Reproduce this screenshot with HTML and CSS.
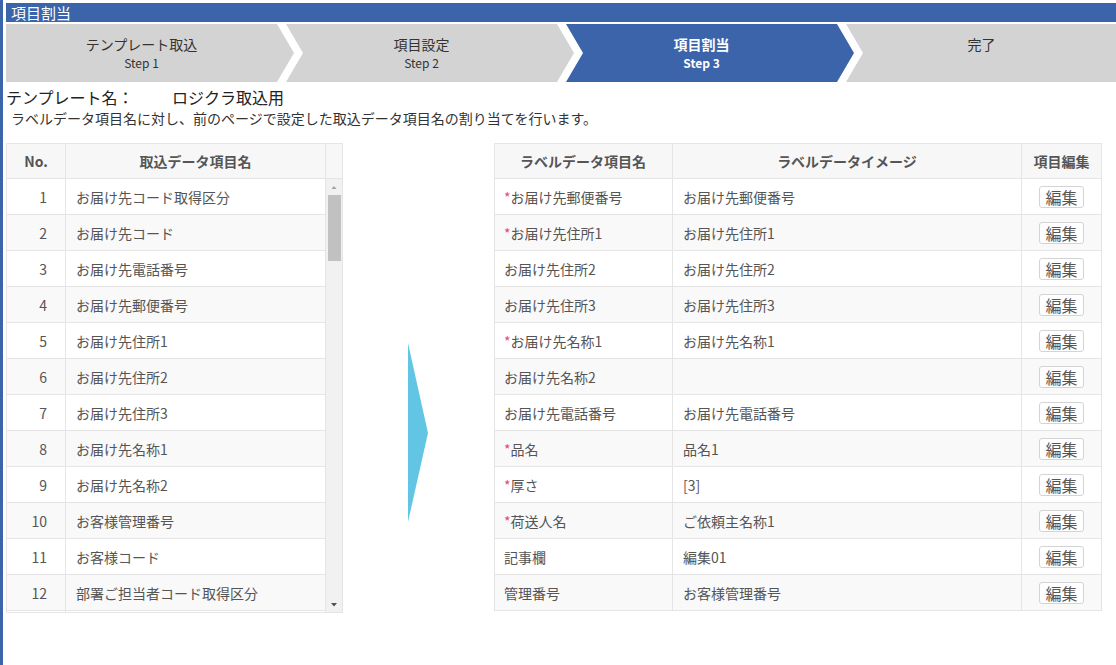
FILE: index.html
```html
<!DOCTYPE html>
<html lang="ja">
<head>
    <meta charset="UTF-8" />
    <title>項目割当</title>
    <link rel="stylesheet" href="styles.css">
</head>
<body>
<div class="page">
    <div class="page-title">項目割当</div>

    <ol class="steps">
        <li class="step"><span class="step-name">テンプレート取込</span><span class="step-no">Step 1</span></li>
        <li class="step"><span class="step-name">項目設定</span><span class="step-no">Step 2</span></li>
        <li class="step active"><span class="step-name">項目割当</span><span class="step-no">Step 3</span></li>
        <li class="step"><span class="step-name">完了</span><span class="step-no"></span></li>
    </ol>

    <div class="template-name"><span class="template-label">テンプレート名：</span>ロジクラ取込用</div>
    <p class="lead">ラベルデータ項目名に対し、前のページで設定した取込データ項目名の割り当てを行います。</p>

    <div class="mapping">
        <!-- 取込データ項目 -->
        <div class="source">
            <div class="source-head">
                <div class="cell">No.</div>
                <div class="cell">取込データ項目名</div>
                <div class="cell gutter"></div>
            </div>
            <div class="source-body">
                <div class="source-rows">
                    <div class="row"><div class="cell no">1</div><div class="cell">お届け先コード取得区分</div></div>
                    <div class="row"><div class="cell no">2</div><div class="cell">お届け先コード</div></div>
                    <div class="row"><div class="cell no">3</div><div class="cell">お届け先電話番号</div></div>
                    <div class="row"><div class="cell no">4</div><div class="cell">お届け先郵便番号</div></div>
                    <div class="row"><div class="cell no">5</div><div class="cell">お届け先住所1</div></div>
                    <div class="row"><div class="cell no">6</div><div class="cell">お届け先住所2</div></div>
                    <div class="row"><div class="cell no">7</div><div class="cell">お届け先住所3</div></div>
                    <div class="row"><div class="cell no">8</div><div class="cell">お届け先名称1</div></div>
                    <div class="row"><div class="cell no">9</div><div class="cell">お届け先名称2</div></div>
                    <div class="row"><div class="cell no">10</div><div class="cell">お客様管理番号</div></div>
                    <div class="row"><div class="cell no">11</div><div class="cell">お客様コード</div></div>
                    <div class="row"><div class="cell no">12</div><div class="cell">部署ご担当者コード取得区分</div></div>
                    <div class="row"><div class="cell no"></div><div class="cell"></div></div>
                </div>
                <div class="scrollbar">
                    <svg class="sb-btn" width="16" height="16" viewBox="0 0 16 16"><polygon points="5.5,10 10.5,10 8,7" fill="#a3a3a3"/></svg>
                    <div class="sb-track"><div class="sb-thumb"></div></div>
                    <svg class="sb-btn" width="16" height="16" viewBox="0 0 16 16"><polygon points="5,7 11,7 8,10.5" fill="#505050"/></svg>
                </div>
            </div>
        </div>

        <div class="arrow">
            <svg width="20" height="179" viewBox="0 0 20 179"><polygon points="0,0 20,90 0,179" fill="#62c5e3"/></svg>
        </div>

        <!-- ラベルデータ項目 -->
        <div class="target">
            <div class="target-row head">
                <div class="cell">ラベルデータ項目名</div>
                <div class="cell">ラベルデータイメージ</div>
                <div class="cell">項目編集</div>
            </div>
            <div class="target-row"><div class="cell"><span class="req">*</span>お届け先郵便番号</div><div class="cell">お届け先郵便番号</div><div class="cell"><button class="edit">編集</button></div></div>
            <div class="target-row"><div class="cell"><span class="req">*</span>お届け先住所1</div><div class="cell">お届け先住所1</div><div class="cell"><button class="edit">編集</button></div></div>
            <div class="target-row"><div class="cell">お届け先住所2</div><div class="cell">お届け先住所2</div><div class="cell"><button class="edit">編集</button></div></div>
            <div class="target-row"><div class="cell">お届け先住所3</div><div class="cell">お届け先住所3</div><div class="cell"><button class="edit">編集</button></div></div>
            <div class="target-row"><div class="cell"><span class="req">*</span>お届け先名称1</div><div class="cell">お届け先名称1</div><div class="cell"><button class="edit">編集</button></div></div>
            <div class="target-row"><div class="cell">お届け先名称2</div><div class="cell"></div><div class="cell"><button class="edit">編集</button></div></div>
            <div class="target-row"><div class="cell">お届け先電話番号</div><div class="cell">お届け先電話番号</div><div class="cell"><button class="edit">編集</button></div></div>
            <div class="target-row"><div class="cell"><span class="req">*</span>品名</div><div class="cell">品名1</div><div class="cell"><button class="edit">編集</button></div></div>
            <div class="target-row"><div class="cell"><span class="req">*</span>厚さ</div><div class="cell">[3]</div><div class="cell"><button class="edit">編集</button></div></div>
            <div class="target-row"><div class="cell"><span class="req">*</span>荷送人名</div><div class="cell">ご依頼主名称1</div><div class="cell"><button class="edit">編集</button></div></div>
            <div class="target-row"><div class="cell">記事欄</div><div class="cell">編集01</div><div class="cell"><button class="edit">編集</button></div></div>
            <div class="target-row"><div class="cell">管理番号</div><div class="cell">お客様管理番号</div><div class="cell"><button class="edit">編集</button></div></div>
        </div>
    </div>
</div>
</body>
</html>
```

FILE: styles.css
```css
:root {
    --primary-color: #3b64ab;
    --step-color: #d3d3d3;
    --line-color: #e5e5e5;
    --text-color: #555;
}

* {
    box-sizing: border-box;
}

body {
    margin: 0;
    min-height: 100vh;
    border-left: 3px solid var(--primary-color);
    font-family: "Noto Sans CJK JP", "Noto Sans", sans-serif;
    color: #222;
    background-color: #fff;
}

.page {
    padding: 3px 0 0 3px;
}

.page-title {
    height: 19px;
    line-height: 19px;
    padding-left: 5px;
    background-color: var(--primary-color);
    color: #fff;
    font-size: 15px;
}

/* steps */
.steps {
    display: flex;
    height: 58px;
    margin: 2px 0 0;
    padding: 0;
    list-style: none;
    overflow: hidden;
}

.step {
    flex: 0 0 288px;
    margin-left: -8px;
    padding: 0 17px 0 0;
    display: flex;
    flex-direction: column;
    justify-content: center;
    align-items: center;
    background-color: var(--step-color);
    color: #333;
    clip-path: polygon(0 0, calc(100% - 17px) 0, 100% 50%, calc(100% - 17px) 100%, 0 100%, 17px 50%);
}

.step:first-child {
    margin-left: 0;
    clip-path: polygon(0 0, calc(100% - 17px) 0, 100% 50%, calc(100% - 17px) 100%, 0 100%);
}

.step.active {
    background-color: var(--primary-color);
    color: #fff;
    font-weight: bold;
}

.step-name {
    font-size: 14px;
    line-height: 19px;
}

.step-no {
    height: 17px;
    font-size: 12px;
    line-height: 17px;
}

/* heading */
.template-name {
    margin-top: 4px;
    font-size: 16px;
    line-height: 22px;
}

.template-label {
    display: inline-block;
    width: 166px;
}

.lead {
    margin: 0;
    padding-left: 5px;
    font-size: 14px;
    line-height: 20px;
    color: #333;
}

/* mapping */
.mapping {
    display: flex;
    align-items: flex-start;
    margin-top: 15px;
    padding-right: 14px;
    color: var(--text-color);
    font-size: 14px;
}

.cell {
    display: flex;
    align-items: center;
    padding: 0 10px;
    border-right: 1px solid var(--line-color);
    white-space: nowrap;
}

.source {
    flex: none;
    width: 337px;
    border: 1px solid var(--line-color);
}

.source-head {
    display: grid;
    grid-template-columns: 59px 260px 16px;
    height: 35px;
    border-bottom: 1px solid var(--line-color);
    background-color: #f7f7f7;
    font-weight: bold;
}

.source-head .cell {
    justify-content: center;
}

.source-head .gutter {
    border-right: none;
}

.source-body {
    display: flex;
    height: 433px;
    overflow: hidden;
}

.source-rows {
    width: 319px;
}

.row {
    display: grid;
    grid-template-columns: 59px 260px;
    height: 36px;
    border-bottom: 1px solid var(--line-color);
}

.row:nth-child(even),
.target-row:nth-child(odd) {
    background-color: #f9f9f9;
}

.row .no {
    justify-content: flex-end;
    padding-right: 18px;
}

.scrollbar {
    width: 16px;
    display: flex;
    flex-direction: column;
    background-color: #f1f1f1;
}

.sb-btn {
    display: block;
    flex: none;
}

.sb-track {
    flex: 1;
}

.sb-thumb {
    height: 66px;
    margin: 0 1px 0 2px;
    background-color: #c1c1c1;
}

.arrow {
    flex: 1;
    display: flex;
    justify-content: center;
    padding: 200px 2px 0 0;
}

.arrow svg {
    display: block;
}

.target {
    flex: none;
    width: 608px;
    border: 1px solid var(--line-color);
    border-bottom: none;
}

.target-row {
    display: grid;
    grid-template-columns: 178px 349px 79px;
    height: 36px;
    border-bottom: 1px solid var(--line-color);
}

.target-row.head {
    height: 35px;
    background-color: #f7f7f7;
    font-weight: bold;
}

.target-row .cell:first-child {
    padding-left: 9px;
}

.target-row .cell:last-child {
    justify-content: center;
    border-right: none;
}

.target-row.head .cell {
    justify-content: center;
}

.req {
    color: #e8437b;
}

.edit {
    height: 22px;
    padding: 0 5px;
    border: 1px solid #d4d4d4;
    border-radius: 3px;
    background-color: #fff;
    color: var(--text-color);
    font-family: "Noto Sans CJK JP", sans-serif;
    font-size: 16px;
    line-height: 20px;
    cursor: pointer;
}
```
